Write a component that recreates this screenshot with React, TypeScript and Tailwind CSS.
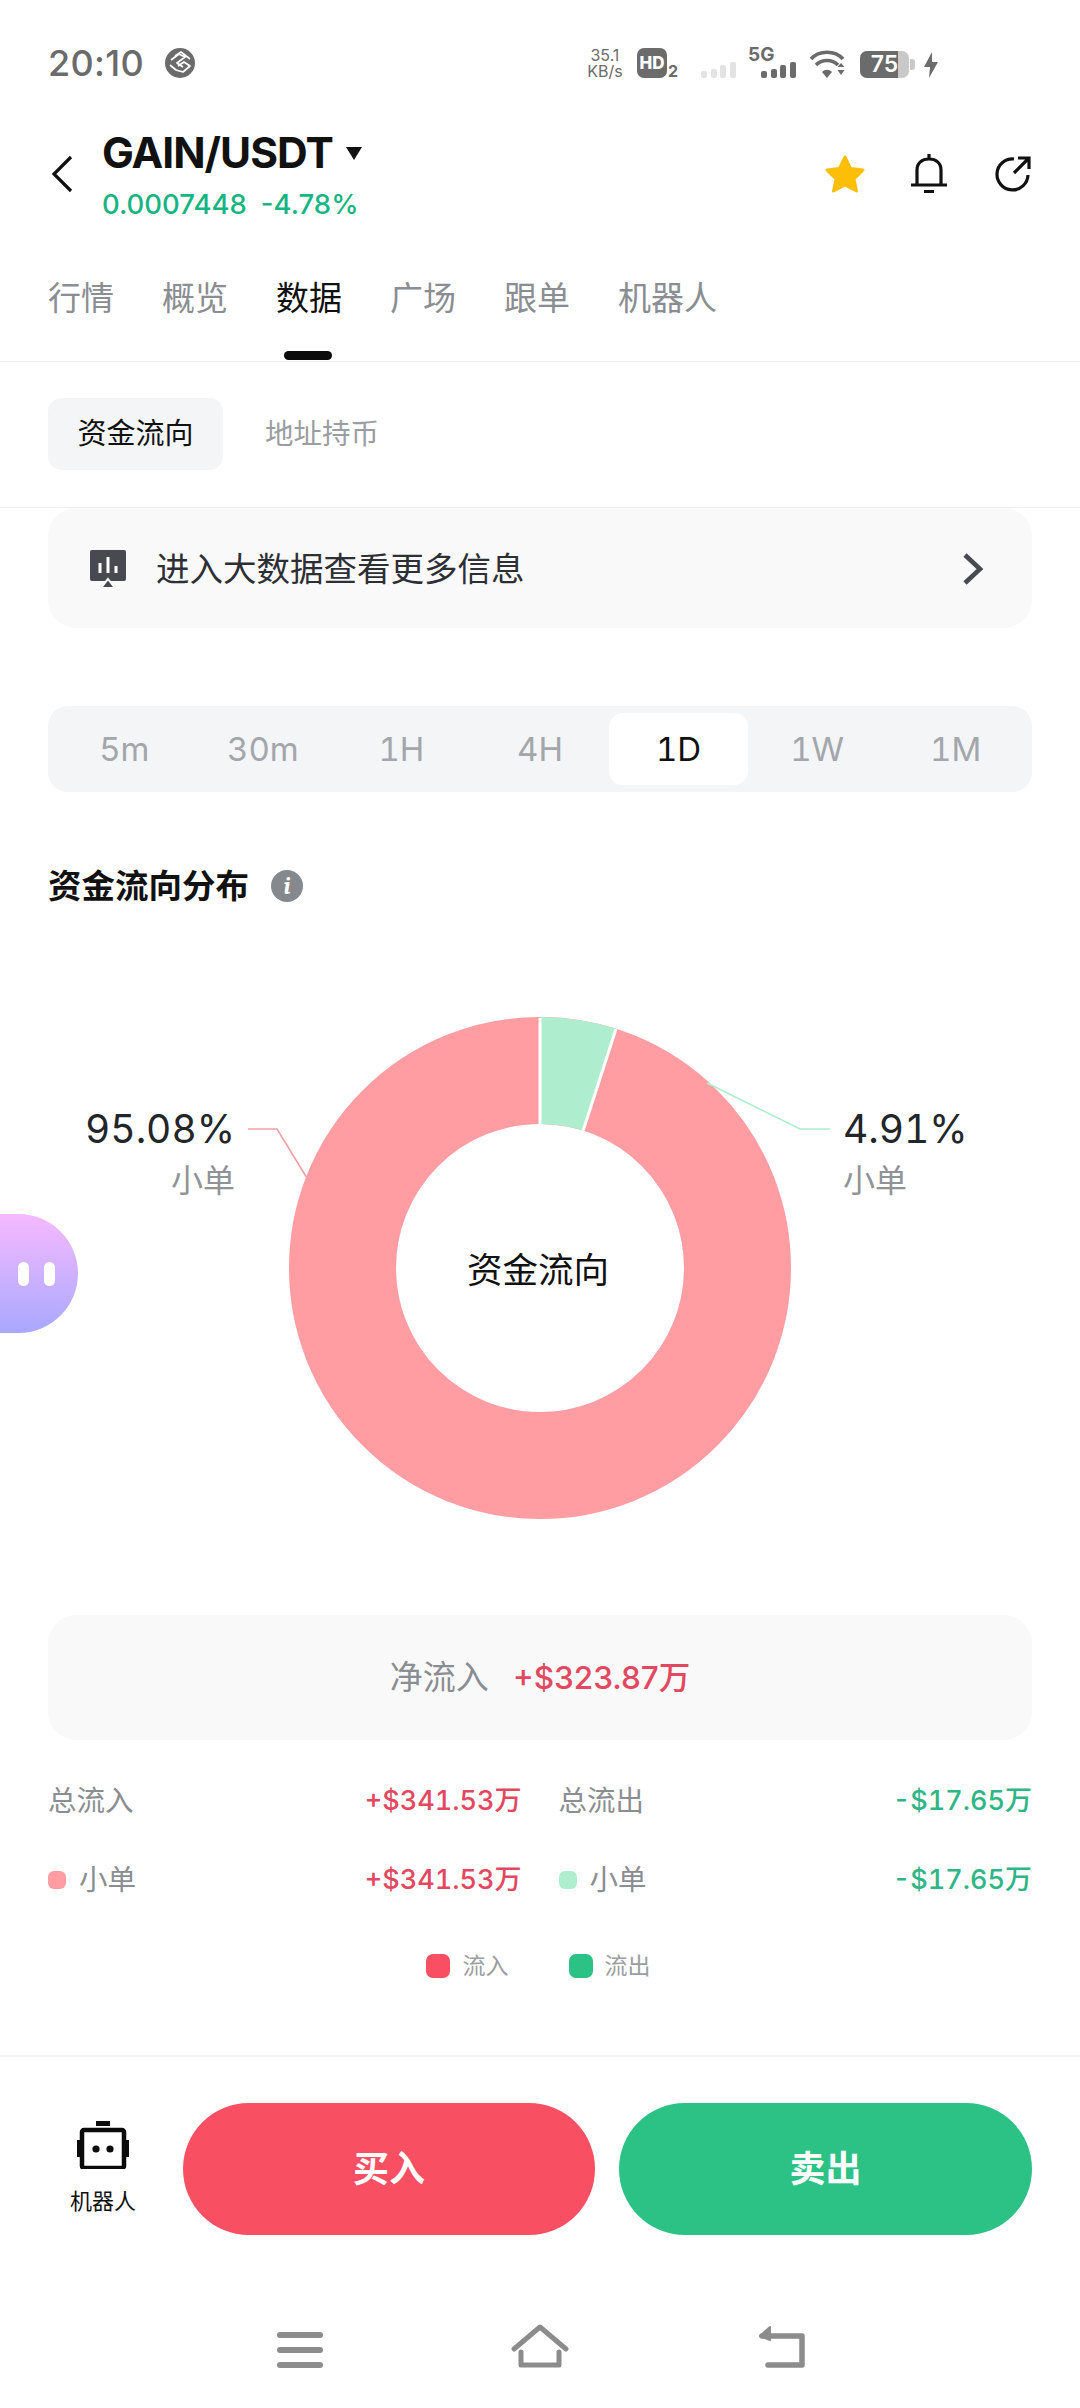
const cjk = '[font-family:Inter,"Noto_Sans_CJK_SC",sans-serif]';

const tabs = ['行情', '概览', '数据', '广场', '跟单', '机器人'];
const periods = ['5m', '30m', '1H', '4H', '1D', '1W', '1M'];

function StatusBar() {
  return (
    <div className="flex h-[100px] items-start justify-between pl-[48px] pr-[142px] pt-[48px] text-[#6b6b6b]">
      <div className="flex items-center gap-[21px]">
        <span className="text-[36px] font-medium leading-[30px] tracking-[0.3px]">20:10</span>
        <svg width="30" height="30" viewBox="0 0 30 30">
          <circle cx="15" cy="15" r="15" fill="#6b6b6b" />
          <path d="M6 12 L14 6 L20 9 L12 15 L18 19 M5 17 L11 22 L18 24 L25 18 L19 14 L13 18 M10 8 L16 4 L25 11" fill="none" stroke="#fff" strokeWidth="1.7" strokeLinejoin="round" />
        </svg>
      </div>
      <div className="flex items-start">
        <div className="-mt-[1px] w-[38px] text-center text-[16px] leading-[16px]">
          <div>35.1</div>
          <div>KB/s</div>
        </div>
        <div className="ml-[13px] flex items-end">
          <div className="flex h-[30px] w-[30px] items-center justify-center rounded-[7px] bg-[#6b6b6b] text-[17px] font-extrabold leading-none text-white">HD</div>
          <span className="ml-[1px] text-[16px] font-bold leading-[13px]">2</span>
        </div>
        <svg className="ml-[23px] mt-[14px]" width="35" height="16" viewBox="0 0 35 16" fill="#e3e3e3">
          <rect x="0" y="9" width="6" height="7" rx="2" />
          <rect x="10" y="7" width="6" height="9" rx="2" />
          <rect x="19" y="3" width="6" height="13" rx="2" />
          <rect x="29" y="0" width="6" height="16" rx="2" />
        </svg>
        <div className="relative ml-[25px] h-[30px] w-[35px]">
          <span className="absolute left-[-13px] top-[-2px] text-[19px] font-bold leading-[18px]">5G</span>
          <svg className="absolute bottom-0 left-0" width="35" height="16" viewBox="0 0 35 16" fill="#6b6b6b">
            <rect x="0" y="9" width="6" height="7" rx="2" />
            <rect x="10" y="7" width="6" height="9" rx="2" />
            <rect x="19" y="3" width="6" height="13" rx="2" />
            <rect x="29" y="0" width="6" height="16" rx="2" />
          </svg>
        </div>
        <svg className="ml-[13px] mt-[2px]" width="38" height="28" viewBox="0 0 38 28" fill="none" stroke="#6b6b6b" strokeWidth="3.6">
          <path d="M2 9 C10 0 26 0 34 9" />
          <path d="M7 15 C13 9 23 9 29 15" />
          <path d="M13 22 L18 28 L23 22 C20 19 16 19 13 22 Z" fill="#6b6b6b" stroke="none" />
          <path d="M32 13 L35.5 17 H28.5 Z M28.5 20 H35.5 L32 25 Z" fill="#6b6b6b" stroke="none" />
        </svg>
        <div className="relative ml-[13px] mt-[3px] h-[27px] w-[49px] overflow-hidden rounded-[7px] bg-[#c9c9c9]">
          <div className="h-full w-[38px] bg-[#6b6b6b]" />
          <span className="absolute inset-0 flex items-center justify-center text-[23px] font-semibold leading-none text-white">75</span>
        </div>
        <div className="ml-[1px] mt-[11px] h-[11px] w-[5px] rounded-r-[3px] bg-[#c9c9c9]" />
        <svg className="ml-[9px] mt-[4px]" width="14" height="26" viewBox="0 0 14 26" fill="#6b6b6b">
          <path d="M8 0 L0 15 H6 L5 26 L14 10 H8 Z" />
        </svg>
      </div>
    </div>
  );
}

function Header() {
  return (
    <div className="flex h-[130px] items-start pl-[50px] pr-[48px]">
      <svg className="mt-[55px]" width="24" height="38" viewBox="0 0 24 38" fill="none" stroke="#111" strokeWidth="3.2">
        <path d="M21 2 L4 19 L21 36" />
      </svg>
      <div className="ml-[28px] pt-[30px]">
        <div className="flex items-center">
          <span className="text-[42.5px] font-bold leading-[46px] tracking-[-1px] text-[#111]">GAIN/USDT</span>
          <svg className="ml-[13px]" width="16" height="13" viewBox="0 0 16 13" fill="#111">
            <path d="M0 0 H16 L8 13 Z" />
          </svg>
        </div>
        <div className="mt-[12px] flex text-[27.5px] font-medium leading-[32px] text-[#17b583]">
          <span>0.0007448</span>
          <span className="ml-[14px]">-4.78%</span>
        </div>
      </div>
      <div className="ml-auto mt-[54px] flex items-center">
        <svg width="42" height="40" viewBox="0 0 42 40" fill="#fdbe08" stroke="#fdbe08" strokeWidth="3" strokeLinejoin="round">
          <path d="M21 3 L26.5 14.5 L39 16 L30 25 L32.5 37 L21 31 L9.5 37 L12 25 L3 16 L15.5 14.5 Z" />
        </svg>
        <svg className="ml-[45px]" width="36" height="40" viewBox="0 0 36 40" fill="none" stroke="#111" strokeWidth="3.2">
          <path d="M0 31 H36 M6 31 V16 C6 9 11 5 18 5 C25 5 30 9 30 16 V31 M18 0 V5 M13 37.5 H23" />
        </svg>
        <svg className="ml-[47px]" width="38" height="38" viewBox="0 0 38 38" fill="none" stroke="#111" strokeWidth="3.2">
          <path d="M20 4 A15.5 15.5 0 1 0 34 20" />
          <path d="M20 18 L35 3 M24 3 H35 V14" />
        </svg>
      </div>
    </div>
  );
}

function TabBar() {
  return (
    <div className="flex h-[132px] items-start gap-[48px] border-b border-[#eeeeee] pl-[48px] pt-[48px]">
      {tabs.map((tab) => (
        <div key={tab} className="relative">
          <span className={`block text-[33px] leading-[40px] ${tab === '数据' ? 'text-[#111]' : 'text-[#8a8d91]'}`}>{tab}</span>
          {tab === '数据' && <div className="absolute left-[8px] top-[73px] h-[9px] w-[48px] rounded-full bg-[#0b0b0b]" />}
        </div>
      ))}
    </div>
  );
}

function SubTabs() {
  return (
    <div className="flex h-[146px] items-start gap-[42px] border-b border-[#f0f0f0] pl-[48px] pt-[36px]">
      <div className="flex h-[72px] w-[175px] items-center justify-center rounded-[14px] bg-[#f4f5f6] text-[29px] text-[#111]">资金流向</div>
      <div className="flex h-[72px] items-center text-[28.5px] text-[#9a9da1]">地址持币</div>
    </div>
  );
}

function Banner() {
  return (
    <div className="mx-[48px] flex h-[120px] items-center rounded-[28px] bg-[#f9f9fa] pl-[42px] pr-[48px] pt-[1px]">
      <svg width="36" height="38" viewBox="0 0 36 38">
        <path d="M2 0 H34 Q36 0 36 2 V29 Q36 31 34 31 H2 Q0 31 0 29 V2 Q0 0 2 0 Z" fill="#484a50" />
        <path d="M10 13 V23 M18 7 V23 M26 16 V23" stroke="#fff" strokeWidth="3" />
        <path d="M18 29 L25 38 H11 Z" fill="#484a50" stroke="#f9f9fa" strokeWidth="2" />
      </svg>
      <span className="ml-[30px] text-[33.5px] leading-[40px] text-[#2d2f34]">进入大数据查看更多信息</span>
      <svg className="ml-auto" width="22" height="32" viewBox="0 0 22 32" fill="none" stroke="#484a50" strokeWidth="4.6">
        <path d="M3 2 L18 16 L3 30" />
      </svg>
    </div>
  );
}

function PeriodTabs() {
  return (
    <div className="mx-[48px] mt-[78px] grid h-[86px] grid-cols-7 rounded-[20px] bg-[#f4f5f6] p-[7px]">
      {periods.map((period) => (
        <div
          key={period}
          className={`flex items-center justify-center rounded-[14px] pt-[2px] text-[33px] tabular-nums ${
            period === '1D' ? 'bg-white text-[#111]' : 'text-[#a3a6aa]'
          }`}
        >
          {period}
        </div>
      ))}
    </div>
  );
}

function FlowChart() {
  return (
    <div className="relative h-[709px]">
      <svg className="block" width="1080" height="709" viewBox="0 0 1080 709">
        <circle cx="540" cy="362" r="197.5" fill="none" stroke="#ff9da3" strokeWidth="107" />
        <circle
          cx="540"
          cy="362"
          r="197.5"
          fill="none"
          stroke="#aeedcd"
          strokeWidth="107"
          pathLength="100"
          strokeDasharray="4.91 95.09"
          transform="rotate(-90 540 362)"
        />
        <path d="M540 112 V218 M616 123 L583 225" stroke="#fff" strokeWidth="3" />
        <path d="M248 223 H277 L307 272" fill="none" stroke="#f0a0a6" strokeWidth="1.6" />
        <path d="M707 177 L800 223 H830" fill="none" stroke="#aeedcd" strokeWidth="1.6" />
      </svg>
      <div className="absolute left-[338px] top-[345px] w-[400px] text-center text-[35.5px] leading-[40px] text-[#111]">资金流向</div>
      <div className="absolute right-[845px] top-[199px] text-right">
        <div className="text-[39px] leading-[48px] tabular-nums text-[#22252a]">95.08%</div>
        <div className="mt-[8px] text-[32px] leading-[40px] text-[#8f9397]">小单</div>
      </div>
      <div className="absolute left-[843px] top-[199px]">
        <div className="text-[39px] leading-[48px] tabular-nums text-[#22252a]">4.91%</div>
        <div className="mt-[8px] text-[32px] leading-[40px] text-[#8f9397]">小单</div>
      </div>
    </div>
  );
}

function StatRow({ label, value, dot, tone }: { label: string; value: string; dot?: string; tone: string }) {
  return (
    <div className="flex h-[40px] items-center justify-between">
      <div className="flex items-center">
        {dot && <div className={`mr-[13px] h-[18px] w-[18px] rounded-[6px] ${dot}`} />}
        <span className="text-[28.5px] text-[#8a8d91]">{label}</span>
      </div>
      <span className={`text-[27px] font-medium tabular-nums ${tone}`}>{value}</span>
    </div>
  );
}

function NetFlow() {
  return (
    <>
      <div className="mx-[48px] flex h-[125px] items-center justify-center rounded-[28px] bg-[#f9f9fa]">
        <span className="text-[33px] text-[#8a8d91]">净流入</span>
        <span className="ml-[24px] text-[31.5px] font-medium text-[#e2485f]">+$323.87万</span>
      </div>
      <div className="mx-[48px] mt-[41px] grid grid-cols-2 gap-x-[37px] gap-y-[39px]">
        <StatRow label="总流入" value="+$341.53万" tone="text-[#e2485f]" />
        <StatRow label="总流出" value="-$17.65万" tone="text-[#2fb586]" />
        <StatRow label="小单" value="+$341.53万" dot="bg-[#ff9da3]" tone="text-[#e2485f]" />
        <StatRow label="小单" value="-$17.65万" dot="bg-[#aeedcd]" tone="text-[#2fb586]" />
      </div>
      <div className="mt-[54px] flex h-[24px] items-center justify-center pr-[4px] text-[23px] text-[#9a9da1]">
        <div className="h-[24px] w-[24px] rounded-[7px] bg-[#f94f63]" />
        <span className="ml-[13px]">流入</span>
        <div className="ml-[60px] h-[24px] w-[24px] rounded-[7px] bg-[#2dc285]" />
        <span className="ml-[12px]">流出</span>
      </div>
    </>
  );
}

function ActionBar() {
  return (
    <div className="mt-[77px] flex h-[120px] items-start border-t-2 border-[#f3f3f3] pl-[48px] pr-[48px] pt-[46px] [box-sizing:content-box]">
      <div className="flex w-[110px] flex-col items-center pt-[18px]">
        <svg width="52" height="48" viewBox="0 0 52 48">
          <rect x="19" y="0" width="14" height="5" fill="#0b0b0b" />
          <rect x="5" y="9" width="42" height="38" rx="2" fill="none" stroke="#0b0b0b" strokeWidth="4.5" />
          <rect x="0" y="19" width="4" height="17" fill="#0b0b0b" />
          <rect x="48" y="19" width="4" height="17" fill="#0b0b0b" />
          <circle cx="19" cy="28" r="3.6" fill="#0b0b0b" />
          <circle cx="33" cy="28" r="3.6" fill="#0b0b0b" />
        </svg>
        <span className="mt-[19px] text-[22px] leading-[26px] text-[#111]">机器人</span>
      </div>
      <div className="ml-[25px] flex h-[132px] w-[412px] items-center justify-center rounded-full bg-[#f94f63] text-[36px] font-bold text-white">买入</div>
      <div className="ml-[24px] flex h-[132px] w-[413px] items-center justify-center rounded-full bg-[#2dc285] text-[36px] font-bold text-white">卖出</div>
    </div>
  );
}

function NavBar() {
  return (
    <div className="mt-[99px] flex h-[46px] items-end pl-[277px]">
      <svg width="46" height="36" viewBox="0 0 46 36" fill="#8c8c8c">
        <rect x="0" y="0" width="46" height="6" rx="3" />
        <rect x="0" y="15" width="46" height="6" rx="3" />
        <rect x="0" y="30" width="46" height="6" rx="3" />
      </svg>
      <svg className="ml-[188px]" width="58" height="44" viewBox="0 0 58 44" fill="none" stroke="#8c8c8c" strokeWidth="5" strokeLinecap="round" strokeLinejoin="round">
        <path d="M3 25 L29 3 L55 25" />
        <path d="M10 28 V41 H48 V28" />
      </svg>
      <svg className="ml-[188px]" width="48" height="44" viewBox="0 0 48 44" fill="none" stroke="#8c8c8c" strokeWidth="5.5" strokeLinecap="round" strokeLinejoin="round">
        <path d="M5 12 H45 V41 H11" />
        <path d="M13 3 L3 12 L13 16 Z" fill="#8c8c8c" strokeWidth="2" />
      </svg>
    </div>
  );
}

export default function App() {
  return (
    <div className={`relative h-[2408px] w-[1080px] overflow-hidden bg-white ${cjk}`}>
      <StatusBar />
      <Header />
      <TabBar />
      <SubTabs />
      <Banner />
      <PeriodTabs />
      <div className="mt-[74px] flex h-[40px] items-center pl-[48px]">
        <span className="text-[33.5px] font-bold text-[#111]">资金流向分布</span>
        <div className="ml-[22px] flex h-[32px] w-[32px] items-center justify-center rounded-full bg-[#85888c] font-serif text-[24px] font-bold italic leading-none text-white">i</div>
      </div>
      <FlowChart />
      <NetFlow />
      <ActionBar />
      <NavBar />
      <div className="absolute left-0 top-[1214px] flex h-[119px] w-[78px] items-center gap-[15px] rounded-r-[60px] bg-gradient-to-b from-[#f6b9ff] to-[#a8a8ff] pl-[18px]">
        <div className="h-[24px] w-[11px] rounded-full bg-white" />
        <div className="h-[24px] w-[11px] rounded-full bg-white" />
      </div>
    </div>
  );
}
